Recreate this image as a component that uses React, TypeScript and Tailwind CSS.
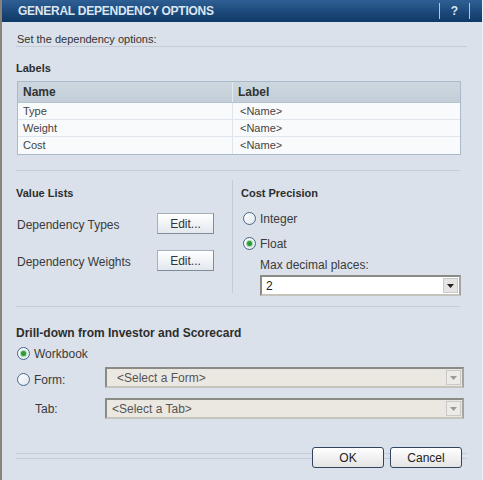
import React from 'react'

const FONT = "font-['Liberation_Sans',Arial,sans-serif]"

function Radio({ checked }: { checked?: boolean }) {
  return (
    <span className="flex h-[13px] w-[13px] shrink-0 items-center justify-center rounded-full border border-[#45678a] bg-gradient-to-br from-[#ffffff] to-[#dfe6ee]">
      {checked && <span className="h-[5px] w-[5px] rounded-full bg-[#2f9a3c] shadow-[0_0_0_1px_#a6d8a8]" />}
    </span>
  )
}

function EditButton() {
  return (
    <button className="h-[21px] w-[57px] border border-[#a3afbb] border-b-[#7f8c99] border-r-[#7f8c99] bg-gradient-to-b from-[#ffffff] to-[#e3e8ee] text-[12px] text-[#333]">
      Edit...
    </button>
  )
}

function Arrow({ disabled }: { disabled?: boolean }) {
  return (
    <span
      className={
        'flex h-full w-[15px] items-center justify-center border border-[#c9c9c9] ' +
        (disabled ? 'bg-[#ecebe6]' : 'bg-[#e4e4e4]')
      }
    >
      <svg width="7" height="4" viewBox="0 0 7 4">
        <path d="M0 0h7L3.5 4z" fill={disabled ? '#9a9a9a' : '#222'} />
      </svg>
    </span>
  )
}

function Select({ value, disabled, width, pad }: { value: string; disabled?: boolean; width: string; pad: string }) {
  return (
    <div
      className={
        'flex h-[21px] items-stretch border-2 border-[#8b8b85] border-b-[#c4c4bd] border-r-[#a5a5a0] p-[1px] ' +
        width +
        (disabled ? ' bg-[#ebe8e2] text-[#555]' : ' bg-white text-[#222]')
      }
    >
      <span className={'flex flex-1 items-center text-[12px] ' + pad}>{value}</span>
      <Arrow disabled={disabled} />
    </div>
  )
}

function FooterButton({ label }: { label: string }) {
  return (
    <button className="h-[21px] w-[72px] rounded-[3px] border border-[#2f465e] bg-gradient-to-b from-[#ffffff] to-[#e4e4e4] text-[12px] text-[#222]">
      {label}
    </button>
  )
}

const rows = ['Type', 'Weight', 'Cost']

export default function App() {
  return (
    <div className={'flex h-[480px] w-[483px] flex-col border-l-2 border-r border-[#8a8478] border-r-[#eef2f6] bg-[#dae1ea] ' + FONT}>
      <div className="flex h-[22px] shrink-0 items-center bg-gradient-to-b from-[#2e5f94] to-[#0e3866] pl-[16px]">
        <span className="text-[12px] font-bold tracking-[-0.25px] text-[#dce6f0]">GENERAL DEPENDENCY OPTIONS</span>
        <div className="ml-auto flex h-full items-center pr-[12px]">
          <span className="h-[16px] w-px bg-[#b3c5d9]" />
          <span className="w-[29px] text-center text-[12px] font-bold text-[#dce6f0]">?</span>
          <span className="h-[16px] w-px bg-[#b3c5d9]" />
        </div>
      </div>

      <div className="flex flex-col pl-[14px] pr-[15px]">
        <p className="mt-[11px] h-[14px] border-b border-[#c3ccd7] pl-[1px] text-[11px] leading-[13px] text-[#333]">
          Set the dependency options:
        </p>

        <h2 className="mt-[15px] text-[11px] font-bold leading-[13px] text-[#2d2d2d]">Labels</h2>

        <div className="ml-[1px] mt-[6px] w-[444px] border border-[#aabaca] bg-[#f9fafb]">
          <div className="flex h-[21px] border-b border-[#b5c3d0] bg-gradient-to-b from-[#cdd7e0] to-[#c3ced8] text-[12px] font-bold text-[#333]">
            <span className="flex w-[215px] items-center border-r border-[#e3e9ef] pl-[5px]">Name</span>
            <span className="flex flex-1 items-center pl-[5px]">Label</span>
          </div>
          {rows.map((r, i) => (
            <div
              key={r}
              className={'flex h-[17px] text-[11px] text-[#444] ' + (i < rows.length - 1 ? 'border-b border-[#dfe5ec]' : '')}
            >
              <span className="flex w-[215px] items-center border-r border-[#dfe5ec] pl-[5px]">{r}</span>
              <span className="flex flex-1 items-center pl-[7px]">&lt;Name&gt;</span>
            </div>
          ))}
        </div>

        <div className="mt-[15px] h-px w-[444px] bg-[#c3ccd7]" />

        <div className="mt-[9px] flex h-[113px]">
          <div className="flex w-[217px] flex-col border-r border-[#c3ccd7] pt-[7px]">
            <h2 className="text-[11px] font-bold leading-[13px] text-[#2d2d2d]">Value Lists</h2>
            <div className="mt-[13px] flex h-[21px] items-center">
              <span className="w-[141px] pl-[1px] pt-[2px] text-[12px] leading-[14px] text-[#3a3a3a]">Dependency Types</span>
              <EditButton />
            </div>
            <div className="mt-[16px] flex h-[21px] items-center">
              <span className="w-[141px] pl-[1px] pt-[2px] text-[12px] leading-[14px] text-[#3a3a3a]">Dependency Weights</span>
              <EditButton />
            </div>
          </div>

          <div className="flex flex-1 flex-col pt-[7px]">
            <h2 className="pl-[8px] text-[11px] font-bold leading-[13px] text-[#2d2d2d]">Cost Precision</h2>
            <div className="mt-[12px] flex h-[13px] items-center gap-[4px] pl-[10px]">
              <Radio />
              <span className="text-[12px] text-[#3a3a3a]">Integer</span>
            </div>
            <div className="mt-[12px] flex h-[13px] items-center gap-[4px] pl-[10px]">
              <Radio checked />
              <span className="text-[12px] text-[#3a3a3a]">Float</span>
            </div>
            <span className="mt-[8px] pl-[27px] text-[12px] leading-[14px] text-[#3a3a3a]">Max decimal places:</span>
            <div className="mt-[3px] pl-[27px]">
              <Select value="2" width="w-[201px]" pad="pl-[3px]" />
            </div>
          </div>
        </div>

        <div className="mt-[13px] h-px w-[444px] bg-[#c3ccd7]" />

        <h2 className="mt-[19px] text-[12px] font-bold leading-[14px] text-[#2d2d2d]">
          Drill-down from Investor and Scorecard
        </h2>
        <div className="ml-[1px] mt-[7px] flex h-[13px] items-center gap-[4px]">
          <Radio checked />
          <span className="text-[12px] text-[#3a3a3a]">Workbook</span>
        </div>
        <div className="mt-[7px] flex h-[21px] items-start">
          <div className="ml-[1px] mt-[6px] flex h-[13px] w-[88px] items-center gap-[4px]">
            <Radio />
            <span className="text-[12px] text-[#3a3a3a]">Form:</span>
          </div>
          <Select value="<Select a Form>" disabled width="w-[359px]" pad="pl-[9px]" />
        </div>
        <div className="mt-[10px] flex h-[21px] items-center">
          <span className="w-[89px] pl-[19px] text-[12px] text-[#3a3a3a]">Tab:</span>
          <Select value="<Select a Tab>" disabled width="w-[359px]" pad="pl-[4px]" />
        </div>

        <div className="mt-[34px] h-[6px] w-[451px] border-y border-[#c3ccd7]" />
        <div className="-mt-[12px] flex justify-end gap-[6px] pr-[5px]">
          <FooterButton label="OK" />
          <FooterButton label="Cancel" />
        </div>
      </div>
    </div>
  )
}
